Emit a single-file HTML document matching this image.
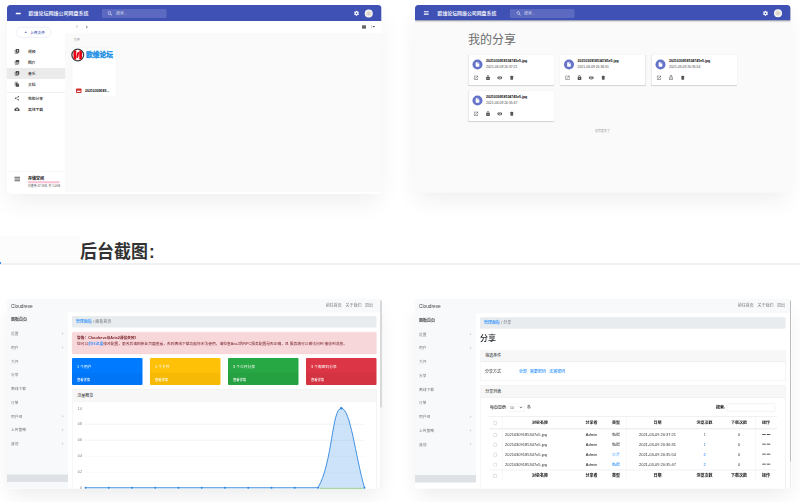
<!DOCTYPE html>
<html lang="zh-CN">
<head>
<meta charset="utf-8">
<title>Cloudreve 截图</title>
<style>
*{box-sizing:border-box;margin:0;padding:0}
html,body{width:800px;height:502px;overflow:hidden;background:#fff}
body{position:relative;font-family:"Liberation Sans","Noto Sans CJK SC",sans-serif;color:#212529}
.shot{position:absolute;width:1500px;height:752px;transform-origin:0 0;transform:scale(.25)}
.abs,.shot *{position:absolute}
.shot span,.shot b,.shot a{position:static}
.clip{left:0;top:0;width:100%;height:100%;overflow:hidden;border-radius:inherit}
.t{white-space:nowrap;line-height:1}
.mui{border-radius:14px 14px 18px 18px;background:#fafafa;height:750px;box-shadow:0 40px 100px -10px rgba(0,0,0,.065)}
.mui .bar{left:0;top:0;width:100%;height:66px;background:#3f51b5;box-shadow:0 3px 6px rgba(0,0,0,.25)}
.mui .title{left:86px;top:22px;font-size:20px;color:#fff;font-weight:500}
.mui .search{left:380px;top:16px;width:258px;height:36px;border-radius:4px;background:rgba(255,255,255,.15)}
.mui .search .t{left:56px;top:10px;font-size:16px;color:rgba(255,255,255,.7)}
.hline{background:#fff;border-radius:2px}
.av{width:32px;height:32px;border-radius:50%;background:radial-gradient(circle at 50% 50%,#cfc8ba 0,#e6e1d8 35%,#fff 75%)}
.adm{background:#fff;height:758px;border-radius:10px 10px 0 0;box-shadow:0 36px 80px -16px rgba(0,0,0,.085);font-size:16px}
.adm .in{left:0;top:4px;width:100%;height:754px}
.adm .nav{left:0;top:-4px;width:1520px;height:54px;background:#f8f9fa}
.adm .side{left:0;top:50px;width:244px;height:710px;background:#f8f9fa}
.adm .tog{left:0;top:698px;width:244px;height:30px;background:#dee2e6}
.adm .brand{left:16px;top:14px;font-size:19px;color:#444}
.adm .navr{right:36px;top:14px;font-size:16px;color:rgba(0,0,0,.55);word-spacing:10px}
.adm .mi{left:16px;font-size:16px;color:#777}
.adm .chev{left:217px;width:7px;height:7px;border-right:2px solid #c4c4c4;border-bottom:2px solid #c4c4c4;transform:rotate(-45deg)}
.adm .crumb{left:260px;top:64px;width:1218px;height:46px;background:#e9ecef;border-radius:4px}
.adm .crumb .t{left:16px;top:15px;font-size:16px;color:#6c757d}
.adm a,.lnk{color:#007bff;text-decoration:none}
.adm .card{border:1px solid rgba(0,0,0,.125);border-radius:4px;background:#fff}
.adm .ch{left:0;top:0;right:0;height:46px;background:#f7f7f7;border-bottom:1px solid rgba(0,0,0,.125)}
.adm .ch .t{left:20px;top:15px;font-size:16px}
.sb{left:1494px;top:-4px;width:4px;height:760px;background:#ececec}
.sb i{left:0;top:6px;width:4px;background:#bdbdbd;border-radius:2px}
</style>
</head>
<body>
<div class="abs" style="left:0;top:236px;width:80px;height:27px;background:#fcfcfd"></div>
<div class="abs" style="left:0;top:263px;width:800px;height:2px;background:#eef2f5"></div>
<div class="abs" style="left:0;top:262px;width:1px;height:2px;background:#3b8cff"></div>
<div class="abs t" id="h2" style="left:80px;top:241px;font-size:17.9px;line-height:22px;font-weight:700;color:#333;transform-origin:0 50%;transform:scaleX(.948)">后台截图<span style="margin-left:1.2px">:</span></div>
<div class="shot mui" id="s1" style="left:7px;top:5px;height:755px;width:1498px;border-radius:14px 14px 8px 18px"><div class="clip">
<div class="bar"></div>
<div style="left:35px;top:31px;width:20px;height:6px;background:#fff;border-radius:2px"></div>
<div class="t" style="left:86px;top:22px;font-size:20px;color:#fff;font-weight:500">欧维论坛网络公司网盘系统</div>
<div class="search"><svg style="left:20px;top:6px" width="24" height="24" viewBox="0 0 24 24"><path fill="#fff" d="M15.5 14h-.79l-.28-.27A6.47 6.47 0 0 0 16 9.5 6.5 6.5 0 1 0 9.500 16c1.610 0 3.090-.59 4.230-1.570l.27.28v.79l5 4.990L20.490 19l-4.990-5zm-6 0C7.010 14 5 11.990 5 9.500S7.010 5 9.500 5 14 7.010 14 9.500 11.990 14 9.500 14z"/></svg>
<div class="t">搜索...</div></div>
<svg style="left:1386px;top:21px" width="24" height="24" viewBox="0 0 24 24"><path fill="#fff" d="M19.430 12.980c.04-.32.07-.64.07-.98s-.03-.66-.07-.98l2.110-1.650c.19-.15.24-.42.120-.64l-2-3.460c-.12-.22-.39-.3-.61-.22l-2.490 1c-.52-.4-1.080-.73-1.690-.98l-.38-2.650A.488.488 0 0 0 14 2h-4c-.25 0-.46.180-.49.420l-.38 2.650c-.61.250-1.170.590-1.690.98l-2.490-1c-.23-.09-.49 0-.61.220l-2 3.460c-.13.220-.07.490.120.640l2.110 1.650c-.04.320-.07.650-.07.980s.03.660.07.980l-2.110 1.650c-.19.150-.24.420-.120.640l2 3.460c.12.220.39.300.61.220l2.490-1c.52.400 1.080.730 1.690.980l.38 2.650c.03.240.24.420.49.420h4c.25 0 .46-.18.490-.42l.38-2.650c.61-.25 1.170-.59 1.690-.98l2.490 1c.23.090.49 0 .61-.22l2-3.460c.12-.22.07-.49-.12-.64l-2.110-1.650zM12 15.500c-1.930 0-3.500-1.570-3.500-3.500s1.570-3.500 3.500-3.500 3.500 1.570 3.500 3.500-1.570 3.500-3.500 3.500z"/></svg>
<div class="av" style="left:1431px;top:18px"></div>
<div style="left:0px;top:64px;width:232px;height:686px;background:#fff"></div>
<div style="left:36px;top:88px;width:140px;height:42px;border:1.5px solid #b9c1ea;border-radius:21px"></div>
<div class="t" style="left:70px;top:100px;font-size:16px;color:#3f51b5;font-weight:700">+</div>
<div class="t" style="left:92px;top:101px;font-size:15px;color:#3f51b5;font-weight:500">上传文件</div>
<div style="left:0px;top:252px;width:232px;height:44px;background:#ebebeb"></div>
<svg style="left:29px;top:174px" width="22" height="22" viewBox="0 0 24 24"><path fill="#4a4a4a" d="M4 6H2v14c0 1.100.9 2 2 2h14v-2H4V6zm16-4H8c-1.100 0-2 .9-2 2v12c0 1.100.9 2 2 2h12c1.100 0 2-.9 2-2V4c0-1.100-.9-2-2-2zm-8 12.500v-9l6 4.500-6 4.500z"/></svg>
<div class="t" style="left:84px;top:178px;font-size:15px;color:#111;font-weight:500">视频</div>
<svg style="left:29px;top:218px" width="22" height="22" viewBox="0 0 24 24"><path fill="#4a4a4a" d="M22 16V4c0-1.100-.9-2-2-2H8c-1.100 0-2 .9-2 2v12c0 1.100.9 2 2 2h12c1.100 0 2-.9 2-2zm-11-4l2.030 2.710L16 11l4 5H8l3-4zM2 6v14c0 1.100.9 2 2 2h14v-2H4V6H2z"/></svg>
<div class="t" style="left:84px;top:222px;font-size:15px;color:#111;font-weight:500">图片</div>
<svg style="left:29px;top:262px" width="22" height="22" viewBox="0 0 24 24"><path fill="#4a4a4a" d="M20 2H8c-1.100 0-2 .9-2 2v12c0 1.100.9 2 2 2h12c1.100 0 2-.9 2-2V4c0-1.100-.9-2-2-2zm-2 5h-3v5.500a2.500 2.500 0 0 1-5 0 2.500 2.500 0 0 1 2.500-2.500c.57 0 1.080.190 1.500.510V5h4v2zM4 6H2v14c0 1.100.9 2 2 2h14v-2H4V6z"/></svg>
<div class="t" style="left:84px;top:266px;font-size:15px;color:#111;font-weight:500">音乐</div>
<svg style="left:29px;top:306px" width="22" height="22" viewBox="0 0 24 24"><path fill="#4a4a4a" d="M16 1H4c-1.100 0-2 .9-2 2v14h2V3h12V1zm-1 4l6 6v10c0 1.100-.9 2-2 2H7.990C6.890 23 6 22.100 6 21l.01-14c0-1.100.89-2 1.990-2h7zm-1 7h5.500L14 6.500V12z"/></svg>
<div class="t" style="left:84px;top:310px;font-size:15px;color:#111;font-weight:500">文档</div>
<div style="left:0px;top:349px;width:232px;height:2px;background:#e3e3e3"></div>
<svg style="left:29px;top:362px" width="22" height="22" viewBox="0 0 24 24"><path fill="#4a4a4a" d="M18 16.080c-.76 0-1.440.3-1.960.77L8.910 12.700c.05-.23.090-.46.090-.7s-.04-.47-.09-.7l7.050-4.110c.54.5 1.250.81 2.040.81 1.660 0 3-1.340 3-3s-1.340-3-3-3-3 1.340-3 3c0 .24.04.47.09.7L8.040 9.810C7.500 9.310 6.790 9 6 9c-1.660 0-3 1.340-3 3s1.340 3 3 3c.79 0 1.500-.31 2.040-.81l7.120 4.160c-.05.210-.08.430-.08.650 0 1.610 1.310 2.920 2.920 2.920 1.610 0 2.920-1.310 2.920-2.920s-1.310-2.920-2.920-2.920z"/></svg>
<div class="t" style="left:84px;top:366px;font-size:15px;color:#111;font-weight:500">我的分享</div>
<svg style="left:29px;top:406px" width="22" height="22" viewBox="0 0 24 24"><path fill="#4a4a4a" d="M19.350 10.040C18.670 6.590 15.640 4 12 4 9.110 4 6.600 5.640 5.350 8.040 2.340 8.360 0 10.910 0 14c0 3.310 2.690 6 6 6h13c2.760 0 5-2.240 5-5 0-2.640-2.050-4.780-4.650-4.960zM17 13l-5 5-5-5h3V9h4v4h3z"/></svg>
<div class="t" style="left:84px;top:410px;font-size:15px;color:#111;font-weight:500">离线下载</div>
<div style="left:0px;top:664px;width:232px;height:2px;background:#f0f0f0"></div>
<div style="left:30px;top:687px;width:22px;height:4px;background:#666"></div>
<div style="left:30px;top:694px;width:22px;height:4px;background:#666"></div>
<div style="left:30px;top:701px;width:22px;height:4px;background:#666"></div>
<div class="t" style="left:84px;top:687px;font-size:16px;color:#111;font-weight:700">存储空间</div>
<div style="left:84px;top:705px;width:126px;height:8px;background:#f9bfd3"></div>
<div class="t" style="left:84px;top:718px;font-size:11.5px;color:#555">已使用 47.5KB, 共 1.0GB</div>
<div style="left:232px;top:64px;width:1268px;height:47px;background:#fff"></div>
<div class="t" style="left:277px;top:78px;font-size:16px;color:#555">/</div>
<div style="left:313px;top:84px;width:8px;height:8px;border-right:2px solid #666;border-top:2px solid #666;transform:rotate(45deg)"></div>
<div style="left:1420px;top:82px;width:16px;height:5px;background:#333"></div>
<div style="left:1420px;top:89px;width:16px;height:5px;background:#333"></div>
<div style="left:1456px;top:80px;width:3px;height:14px;background:#ccc"></div>
<div style="left:1462px;top:84px;border:5px solid transparent;border-top:6px solid #444;width:0;height:0"></div>
<div class="t" style="left:266px;top:133px;font-size:13px;color:#888">文件</div>
<div style="left:260px;top:170px;width:176px;height:196px;background:#fff;border:1px solid #ececec;border-radius:6px"></div>
<div style="left:257px;top:174px;width:52px;height:52px;border-radius:50%;background:#fff;border:5px solid #3c3c3c"></div>
<div style="left:266px;top:182px;width:11px;height:36px;background:#e60012;border-radius:6px 0 0 6px"></div>
<div style="left:289px;top:182px;width:11px;height:36px;background:#e60012;border-radius:0 6px 6px 0"></div>
<div style="left:279px;top:188px;width:8px;height:24px;background:#e60012;border-radius:4px;transform:skewX(-12deg)"></div>
<div class="t" style="left:316px;top:185px;font-size:27px;font-weight:900;color:#1e90e6;-webkit-text-stroke:1px #1e90e6">欧维论坛</div>
<div style="left:276px;top:334px;width:22px;height:18px;border-radius:3px;background:#d32f2f"></div>
<div style="left:280px;top:343px;width:14px;height:5px;background:#fff"></div>
<div style="left:0px;top:748px;width:1500px;height:8px;background:#fff"></div>
<div class="t" style="left:312px;top:336px;font-size:14px;color:#000;font-weight:700">20210309185...</div>
</div></div>
<div class="shot mui" id="s2" style="left:415px;top:5px;width:1502px"><div class="clip">
<div class="bar" style="height:61px;box-shadow:0 3px 8px rgba(0,0,0,.35)"></div>
<div style="left:35px;top:25px;width:20px;height:3px;background:#fff;border-radius:2px"></div>
<div style="left:35px;top:31px;width:20px;height:3px;background:#fff;border-radius:2px"></div>
<div style="left:35px;top:37px;width:20px;height:3px;background:#fff;border-radius:2px"></div>
<div class="t" style="left:90px;top:22px;font-size:19.6px;color:#fff;font-weight:500">欧维论坛网络公司网盘系统</div>
<div class="search"><svg style="left:24px;top:7px" width="22" height="22" viewBox="0 0 24 24"><path fill="#fff" d="M15.5 14h-.79l-.28-.27A6.47 6.47 0 0 0 16 9.5 6.5 6.5 0 1 0 9.500 16c1.610 0 3.090-.59 4.230-1.570l.27.28v.79l5 4.990L20.490 19l-4.990-5zm-6 0C7.010 14 5 11.990 5 9.500S7.010 5 9.500 5 14 7.010 14 9.500 11.990 14 9.500 14z"/></svg>
<div class="t">搜索...</div></div>
<svg style="left:1390px;top:21px" width="24" height="24" viewBox="0 0 24 24"><path fill="#fff" d="M19.430 12.980c.04-.32.07-.64.07-.98s-.03-.66-.07-.98l2.110-1.650c.19-.15.24-.42.120-.64l-2-3.460c-.12-.22-.39-.3-.61-.22l-2.490 1c-.52-.4-1.080-.73-1.690-.98l-.38-2.650A.488.488 0 0 0 14 2h-4c-.25 0-.46.180-.49.420l-.38 2.650c-.61.250-1.170.590-1.690.98l-2.490-1c-.23-.09-.49 0-.61.220l-2 3.460c-.13.220-.07.490.120.640l2.110 1.650c-.04.320-.07.650-.07.980s.03.660.07.980l-2.110 1.650c-.19.150-.24.420-.120.640l2 3.460c.12.220.39.300.61.220l2.490-1c.52.400 1.080.730 1.690.980l.38 2.650c.03.240.24.420.49.420h4c.25 0 .46-.18.490-.42l.38-2.650c.61-.25 1.170-.59 1.690-.98l2.490 1c.23.090.49 0 .61-.22l2-3.460c.12-.22.07-.49-.12-.64l-2.110-1.650zM12 15.500c-1.930 0-3.500-1.570-3.500-3.500s1.570-3.500 3.500-3.500 3.500 1.570 3.500 3.500-1.570 3.500-3.500 3.500z"/></svg>
<div class="av" style="left:1436px;top:17px"></div>
<div class="t" style="left:212px;top:112px;font-size:48px;line-height:52px;color:#6c6c6c;font-weight:400">我的分享</div>
<div style="left:214px;top:200px;width:342px;height:120px;background:#fff;border-radius:4px;box-shadow:0 3px 4px rgba(0,0,0,.16),0 0 2px rgba(0,0,0,.08)"></div>
<div style="left:230px;top:218px;width:40px;height:40px;border-radius:50%;background:#6573c9"></div>
<svg style="left:239px;top:227px" width="22" height="22" viewBox="0 0 24 24"><path fill="#fff" d="M6 2c-1.100 0-1.990.9-1.990 2L4 20c0 1.100.89 2 1.990 2H18c1.100 0 2-.9 2-2V8l-6-6H6zm7 7V3.500L18.500 9H13z"/></svg>
<div class="t" style="left:284px;top:217px;font-size:14px;color:#000;font-weight:700">2021030918534745e5.jpg</div>
<div class="t" style="left:284px;top:241px;font-size:13.5px;color:#444">2021-03-09 20:37:21</div>
<svg style="left:233.0px;top:280px" width="22" height="22" viewBox="0 0 24 24"><path fill="#555" d="M19 19H5V5h7V3H5c-1.110 0-2 .9-2 2v14c0 1.100.89 2 2 2h14c1.100 0 2-.9 2-2v-7h-2v7zM14 3v2h3.590l-9.830 9.830 1.410 1.410L19 6.410V10h2V3h-7z"/></svg>
<svg style="left:280.5px;top:280px" width="22" height="22" viewBox="0 0 24 24"><path fill="#555" d="M18 8h-1V6c0-2.760-2.240-5-5-5S7 3.240 7 6v2H6c-1.100 0-2 .9-2 2v10c0 1.100.9 2 2 2h12c1.100 0 2-.9 2-2V10c0-1.100-.9-2-2-2zm-6 9c-1.100 0-2-.9-2-2s.9-2 2-2 2 .9 2 2-.9 2-2 2zm3.100-9H8.900V6c0-1.710 1.390-3.100 3.100-3.100 1.710 0 3.100 1.390 3.100 3.100v2z"/></svg>
<svg style="left:328.0px;top:280px" width="22" height="22" viewBox="0 0 24 24"><path fill="#555" d="M12 4.500C7 4.500 2.730 7.610 1 12c1.730 4.390 6 7.500 11 7.500s9.270-3.110 11-7.500c-1.730-4.390-6-7.500-11-7.500zM12 17c-2.760 0-5-2.240-5-5s2.240-5 5-5 5 2.240 5 5-2.240 5-5 5zm0-8c-1.660 0-3 1.340-3 3s1.340 3 3 3 3-1.340 3-3-1.340-3-3-3z"/></svg>
<svg style="left:375.5px;top:280px" width="22" height="22" viewBox="0 0 24 24"><path fill="#555" d="M6 19c0 1.100.9 2 2 2h8c1.100 0 2-.9 2-2V7H6v12zM19 4h-3.500l-1-1h-5l-1 1H5v2h14V4z"/></svg>
<div style="left:580px;top:200px;width:342px;height:120px;background:#fff;border-radius:4px;box-shadow:0 3px 4px rgba(0,0,0,.16),0 0 2px rgba(0,0,0,.08)"></div>
<div style="left:596px;top:218px;width:40px;height:40px;border-radius:50%;background:#6573c9"></div>
<svg style="left:605px;top:227px" width="22" height="22" viewBox="0 0 24 24"><path fill="#fff" d="M6 2c-1.100 0-1.990.9-1.990 2L4 20c0 1.100.89 2 1.990 2H18c1.100 0 2-.9 2-2V8l-6-6H6zm7 7V3.500L18.500 9H13z"/></svg>
<div class="t" style="left:650px;top:217px;font-size:14px;color:#000;font-weight:700">2021030918534745e5.jpg</div>
<div class="t" style="left:650px;top:241px;font-size:13.5px;color:#444">2021-03-09 20:36:31</div>
<svg style="left:599.0px;top:280px" width="22" height="22" viewBox="0 0 24 24"><path fill="#555" d="M19 19H5V5h7V3H5c-1.110 0-2 .9-2 2v14c0 1.100.89 2 2 2h14c1.100 0 2-.9 2-2v-7h-2v7zM14 3v2h3.590l-9.830 9.830 1.410 1.410L19 6.410V10h2V3h-7z"/></svg>
<svg style="left:646.5px;top:280px" width="22" height="22" viewBox="0 0 24 24"><path fill="#555" d="M18 8h-1V6c0-2.760-2.240-5-5-5S7 3.240 7 6v2H6c-1.100 0-2 .9-2 2v10c0 1.100.9 2 2 2h12c1.100 0 2-.9 2-2V10c0-1.100-.9-2-2-2zm-6 9c-1.100 0-2-.9-2-2s.9-2 2-2 2 .9 2 2-.9 2-2 2zm3.100-9H8.900V6c0-1.710 1.390-3.100 3.100-3.100 1.710 0 3.100 1.390 3.100 3.100v2z"/></svg>
<svg style="left:694.0px;top:280px" width="22" height="22" viewBox="0 0 24 24"><path fill="#555" d="M12 4.500C7 4.500 2.730 7.610 1 12c1.730 4.390 6 7.500 11 7.500s9.270-3.110 11-7.500c-1.730-4.390-6-7.500-11-7.500zM12 17c-2.760 0-5-2.240-5-5s2.240-5 5-5 5 2.240 5 5-2.240 5-5 5zm0-8c-1.660 0-3 1.340-3 3s1.340 3 3 3 3-1.340 3-3-1.340-3-3-3z"/></svg>
<svg style="left:741.5px;top:280px" width="22" height="22" viewBox="0 0 24 24"><path fill="#555" d="M6 19c0 1.100.9 2 2 2h8c1.100 0 2-.9 2-2V7H6v12zM19 4h-3.500l-1-1h-5l-1 1H5v2h14V4z"/></svg>
<div style="left:946px;top:200px;width:342px;height:120px;background:#fff;border-radius:4px;box-shadow:0 3px 4px rgba(0,0,0,.16),0 0 2px rgba(0,0,0,.08)"></div>
<div style="left:962px;top:218px;width:40px;height:40px;border-radius:50%;background:#6573c9"></div>
<svg style="left:971px;top:227px" width="22" height="22" viewBox="0 0 24 24"><path fill="#fff" d="M6 2c-1.100 0-1.990.9-1.990 2L4 20c0 1.100.89 2 1.990 2H18c1.100 0 2-.9 2-2V8l-6-6H6zm7 7V3.500L18.500 9H13z"/></svg>
<div class="t" style="left:1016px;top:217px;font-size:14px;color:#000;font-weight:700">2021030918534745e5.jpg</div>
<div class="t" style="left:1016px;top:241px;font-size:13.5px;color:#444">2021-03-09 20:35:54</div>
<svg style="left:965.0px;top:280px" width="22" height="22" viewBox="0 0 24 24"><path fill="#555" d="M19 19H5V5h7V3H5c-1.110 0-2 .9-2 2v14c0 1.100.89 2 2 2h14c1.100 0 2-.9 2-2v-7h-2v7zM14 3v2h3.590l-9.830 9.830 1.410 1.410L19 6.410V10h2V3h-7z"/></svg>
<svg style="left:1012.5px;top:280px" width="22" height="22" viewBox="0 0 24 24"><path fill="#555" d="M12 17c1.100 0 2-.9 2-2s-.9-2-2-2-2 .9-2 2 .9 2 2 2zm6-9h-1V6c0-2.760-2.240-5-5-5S7 3.240 7 6h1.900c0-1.710 1.390-3.100 3.100-3.100 1.710 0 3.100 1.390 3.100 3.100v2H6c-1.100 0-2 .9-2 2v10c0 1.100.9 2 2 2h12c1.100 0 2-.9 2-2V10c0-1.100-.9-2-2-2zm0 12H6V10h12v10z"/></svg>
<svg style="left:1060.0px;top:280px" width="22" height="22" viewBox="0 0 24 24"><path fill="#555" d="M6 19c0 1.100.9 2 2 2h8c1.100 0 2-.9 2-2V7H6v12zM19 4h-3.500l-1-1h-5l-1 1H5v2h14V4z"/></svg>
<div style="left:214px;top:344px;width:342px;height:120px;background:#fff;border-radius:4px;box-shadow:0 3px 4px rgba(0,0,0,.16),0 0 2px rgba(0,0,0,.08)"></div>
<div style="left:230px;top:362px;width:40px;height:40px;border-radius:50%;background:#6573c9"></div>
<svg style="left:239px;top:371px" width="22" height="22" viewBox="0 0 24 24"><path fill="#fff" d="M6 2c-1.100 0-1.990.9-1.990 2L4 20c0 1.100.89 2 1.990 2H18c1.100 0 2-.9 2-2V8l-6-6H6zm7 7V3.500L18.500 9H13z"/></svg>
<div class="t" style="left:284px;top:361px;font-size:14px;color:#000;font-weight:700">2021030918534745e5.jpg</div>
<div class="t" style="left:284px;top:385px;font-size:13.5px;color:#444">2021-03-09 20:35:47</div>
<svg style="left:233.0px;top:424px" width="22" height="22" viewBox="0 0 24 24"><path fill="#555" d="M19 19H5V5h7V3H5c-1.110 0-2 .9-2 2v14c0 1.100.89 2 2 2h14c1.100 0 2-.9 2-2v-7h-2v7zM14 3v2h3.590l-9.830 9.830 1.410 1.410L19 6.410V10h2V3h-7z"/></svg>
<svg style="left:280.5px;top:424px" width="22" height="22" viewBox="0 0 24 24"><path fill="#555" d="M18 8h-1V6c0-2.760-2.240-5-5-5S7 3.240 7 6v2H6c-1.100 0-2 .9-2 2v10c0 1.100.9 2 2 2h12c1.100 0 2-.9 2-2V10c0-1.100-.9-2-2-2zm-6 9c-1.100 0-2-.9-2-2s.9-2 2-2 2 .9 2 2-.9 2-2 2zm3.100-9H8.900V6c0-1.710 1.390-3.100 3.100-3.100 1.710 0 3.100 1.390 3.100 3.100v2z"/></svg>
<svg style="left:328.0px;top:424px" width="22" height="22" viewBox="0 0 24 24"><path fill="#555" d="M12 4.500C7 4.500 2.730 7.610 1 12c1.730 4.390 6 7.500 11 7.500s9.270-3.110 11-7.500c-1.730-4.390-6-7.500-11-7.500zM12 17c-2.760 0-5-2.240-5-5s2.240-5 5-5 5 2.240 5 5-2.240 5-5 5zm0-8c-1.660 0-3 1.340-3 3s1.340 3 3 3 3-1.340 3-3-1.340-3-3-3z"/></svg>
<svg style="left:375.5px;top:424px" width="22" height="22" viewBox="0 0 24 24"><path fill="#555" d="M6 19c0 1.100.9 2 2 2h8c1.100 0 2-.9 2-2V7H6v12zM19 4h-3.500l-1-1h-5l-1 1H5v2h14V4z"/></svg>
<div class="t" style="left:720px;top:498px;font-size:12px;color:#999">没有更多了</div>
</div></div>
<div class="shot adm" id="s3" style="left:7px;top:299px;"><div class="clip">
<div class="in">
<div class="nav" style="height:54px"></div><div class="side" style="top:50px"></div><div class="tog" style="top:698px"></div>
<div class="t brand" style="top:14px">Cloudreve</div>
<div class="t navr" style="top:14px;right:36px">前往首页 关于我们 退出</div>
<div class="t mi" style="top:72px;color:#111;font-weight:500">面板首页</div>
<div class="t mi" style="top:127px;color:#777;font-size:15px">设置</div>
<div class="chev" style="top:131px"></div>
<div class="t mi" style="top:182px;color:#777;font-size:15px">用户</div>
<div class="chev" style="top:186px"></div>
<div class="t mi" style="top:237px;color:#777;font-size:15px">文件</div>
<div class="t mi" style="top:292px;color:#777;font-size:15px">分享</div>
<div class="t mi" style="top:347px;color:#777;font-size:15px">离线下载</div>
<div class="t mi" style="top:402px;color:#777;font-size:15px">订单</div>
<div class="t mi" style="top:457px;color:#777;font-size:15px">用户组</div>
<div class="chev" style="top:461px"></div>
<div class="t mi" style="top:512px;color:#777;font-size:15px">上传策略</div>
<div class="chev" style="top:516px"></div>
<div class="t mi" style="top:567px;color:#777;font-size:15px">其他</div>
<div class="chev" style="top:571px"></div>
<div class="sb" style="left:1494px"><i style="height:428px"></i></div>
<div class="crumb" style="top:64px"><div class="t"><a>管理面板</a> / 面板首页</div></div>
<div style="left:260px;top:128px;width:1218px;height:88px;background:#f8d7da;border:1px solid #f5c6cb;border-radius:4px"></div>
<div class="t" style="left:280px;top:144px;font-size:15px;color:#721c24;font-weight:700">警告：Cloudreve与Aria2通信失败！</div>
<div class="t" style="left:280px;top:168px;font-size:15px;color:#721c24">您可以<a>前往这里</a>修改配置，更改后请刷新此页面查看，否则离线下载功能将无法使用，请检查Aria2的RPC服务配置是否正确，且 服务端可以被访问到 接收到消息。</div>
<div style="left:260px;top:232px;width:282px;height:108px;background:#007bff;border-radius:4px"></div>
<div style="left:260px;top:290px;width:282px;height:50px;background:rgba(0,0,0,.035);border-top:1px solid rgba(0,0,0,.08);border-radius:0 0 4px 4px"></div>
<div class="t" style="left:280px;top:259px;font-size:15px;color:#fff">1 个用户</div>
<div class="t" style="left:280px;top:311px;font-size:13px;color:#fff;font-weight:500">查看详情</div>
<div style="left:572px;top:232px;width:282px;height:108px;background:#ffc107;border-radius:4px"></div>
<div style="left:572px;top:290px;width:282px;height:50px;background:rgba(0,0,0,.035);border-top:1px solid rgba(0,0,0,.08);border-radius:0 0 4px 4px"></div>
<div class="t" style="left:592px;top:259px;font-size:15px;color:#fff">1 个文件</div>
<div class="t" style="left:592px;top:311px;font-size:13px;color:#fff;font-weight:500">查看详情</div>
<div style="left:884px;top:232px;width:282px;height:108px;background:#28a745;border-radius:4px"></div>
<div style="left:884px;top:290px;width:282px;height:50px;background:rgba(0,0,0,.035);border-top:1px solid rgba(0,0,0,.08);border-radius:0 0 4px 4px"></div>
<div class="t" style="left:904px;top:259px;font-size:15px;color:#fff">3 个公开分享</div>
<div class="t" style="left:904px;top:311px;font-size:13px;color:#fff;font-weight:500">查看详情</div>
<div style="left:1196px;top:232px;width:282px;height:108px;background:#dc3545;border-radius:4px"></div>
<div style="left:1196px;top:290px;width:282px;height:50px;background:rgba(0,0,0,.035);border-top:1px solid rgba(0,0,0,.08);border-radius:0 0 4px 4px"></div>
<div class="t" style="left:1216px;top:259px;font-size:15px;color:#fff">3 个需密码分享</div>
<div class="t" style="left:1216px;top:311px;font-size:13px;color:#fff;font-weight:500">查看详情</div>
<div class="card" style="left:260px;top:358px;width:1218px;height:420px"><div class="ch"><div class="t">流量概览</div></div></div>
<svg style="left:260px;top:407px" width="1218" height="349" viewBox="260 404 1218 349">
<g stroke="#e6e6e6" stroke-width="2"><line x1="308" x2="1430" y1="494" y2="494"/><line x1="308" x2="1430" y1="558" y2="558"/><line x1="308" x2="1430" y1="622" y2="622" stroke="#f1f1f1"/><line x1="308" x2="1430" y1="686" y2="686" stroke="#f3f3f3"/></g>
<g font-family="Liberation Sans, sans-serif" font-size="12" fill="#666" text-anchor="end"><text x="300" y="436">1.0</text><text x="300" y="498">0.8</text><text x="300" y="562">0.6</text><text x="300" y="626">0.4</text><text x="300" y="690">0.2</text><text x="300" y="752">0</text></g>
<path d="M314 748 L1244 748 C1302 649 1300 430 1337 430 C1374 430 1393 621 1430 748 Z" fill="rgba(54,142,230,.25)"/>
<path d="M314 748 L1244 748 C1302 649 1300 430 1337 430 C1374 430 1393 621 1430 748" fill="none" stroke="#2f86e0" stroke-width="3.6" stroke-linejoin="round"/>
<line x1="1250" x2="1426" y1="750" y2="750" stroke="#66bb6a" stroke-width="3"/>
<g fill="#2f86e0"><circle cx="1337" cy="430" r="5"/><circle cx="407" cy="748" r="4"/><circle cx="500" cy="748" r="4"/><circle cx="593" cy="748" r="4"/><circle cx="686" cy="748" r="4"/><circle cx="779" cy="748" r="4"/><circle cx="872" cy="748" r="4"/><circle cx="965" cy="748" r="4"/><circle cx="1058" cy="748" r="4"/><circle cx="1151" cy="748" r="4"/><circle cx="1244" cy="748" r="4"/><circle cx="1430" cy="748" r="4"/><circle cx="314" cy="748" r="4"/></g>
</svg>
</div>
</div></div>
<div class="shot adm" id="s4" style="left:415px;top:299px;width:1506px"><div class="clip">
<div class="in">
<div class="nav" style="height:56px"></div><div class="side" style="top:52px;height:676px"></div><div class="tog" style="top:700px"></div>
<div class="t brand" style="top:16px">Cloudreve</div>
<div class="t navr" style="top:16px;right:26px">前往首页 关于我们 退出</div>
<div class="t mi" style="top:74px;color:#111;font-weight:500">面板首页</div>
<div class="t mi" style="top:129px;color:#777;font-size:15px">设置</div>
<div class="chev" style="top:133px"></div>
<div class="t mi" style="top:184px;color:#777;font-size:15px">用户</div>
<div class="chev" style="top:188px"></div>
<div class="t mi" style="top:239px;color:#777;font-size:15px">文件</div>
<div class="t mi" style="top:294px;color:#777;font-size:15px">分享</div>
<div class="t mi" style="top:349px;color:#777;font-size:15px">离线下载</div>
<div class="t mi" style="top:404px;color:#777;font-size:15px">订单</div>
<div class="t mi" style="top:459px;color:#777;font-size:15px">用户组</div>
<div class="chev" style="top:463px"></div>
<div class="t mi" style="top:514px;color:#777;font-size:15px">上传策略</div>
<div class="chev" style="top:518px"></div>
<div class="t mi" style="top:569px;color:#777;font-size:15px">其他</div>
<div class="chev" style="top:573px"></div>
<div class="sb" style="left:1500px"><i style="height:644px"></i></div>
<div class="crumb" style="top:69px;width:1222px"><div class="t"><a>管理面板</a> / 分享</div></div>
<div class="t" style="left:260px;top:135px;font-size:32px;line-height:36px;color:#212529;font-weight:500">分享</div>
<div class="card" style="left:260px;top:200px;width:1222px;height:124px"><div class="ch"><div class="t">筛选条件</div></div></div>
<div class="t" style="left:280px;top:278px;font-size:16px;color:#333">分享方式</div>
<div class="t" style="left:416px;top:278px;font-size:16px;word-spacing:8px;color:#007bff">全部 需要密码 无需密码</div>
<div class="card" style="left:260px;top:342px;width:1222px;height:420px"><div class="ch"><div class="t">分享列表</div></div></div>
<div class="t" style="left:300px;top:422px;font-size:16px;color:#222;font-weight:500">每页显示</div>
<div style="left:368px;top:414px;width:72px;height:32px;border:1px solid #ced4da;border-radius:4px;background:#fff"></div>
<div class="t" style="left:380px;top:423px;font-size:14px;color:#495057">10</div>
<div style="left:420px;top:423px;width:8px;height:8px;border-right:2px solid #555;border-bottom:2px solid #555;transform:rotate(45deg)"></div>
<div class="t" style="left:448px;top:422px;font-size:16px;color:#333">条</div>
<div class="t" style="left:1204px;top:422px;font-size:16px;color:#111;font-weight:700">搜索:</div>
<div style="left:1248px;top:414px;width:192px;height:32px;border:1px solid #ced4da;border-radius:4px;background:#fff"></div>
<div style="left:296px;top:465px;width:1152px;height:2px;background:#dee2e6"></div>
<div style="left:296px;top:514px;width:1152px;height:3px;background:#dee2e6"></div>
<div style="left:296px;top:679px;width:1152px;height:2px;background:#dee2e6"></div>
<div style="left:350px;top:466px;width:1px;height:260px;background:#dee2e6"></div>
<div style="left:846px;top:466px;width:1px;height:260px;background:#dee2e6"></div>
<div style="left:1360px;top:466px;width:1px;height:260px;background:#dee2e6"></div>
<div style="left:313px;top:485px;width:14px;height:14px;border:1.5px solid #888;border-radius:3px;background:#fff"></div>
<div class="t" style="left:350px;width:300px;text-align:center;top:484px;font-size:16px;font-weight:700;color:#111">对象名称</div>
<div class="t" style="left:556px;width:300px;text-align:center;top:484px;font-size:16px;font-weight:700;color:#111">分享者</div>
<div class="t" style="left:654px;width:300px;text-align:center;top:484px;font-size:16px;font-weight:700;color:#111">类型</div>
<div class="t" style="left:820px;width:300px;text-align:center;top:484px;font-size:16px;font-weight:700;color:#111">日期</div>
<div class="t" style="left:1008px;width:300px;text-align:center;top:484px;font-size:16px;font-weight:700;color:#111">浏览次数</div>
<div class="t" style="left:1146px;width:300px;text-align:center;top:484px;font-size:16px;font-weight:700;color:#111">下载次数</div>
<div class="t" style="left:1254px;width:300px;text-align:center;top:484px;font-size:16px;font-weight:700;color:#111">操作</div>
<div style="left:313px;top:696px;width:14px;height:14px;border:1.5px solid #888;border-radius:3px;background:#fff"></div>
<div class="t" style="left:350px;width:300px;text-align:center;top:695px;font-size:16px;font-weight:700;color:#111">对象名称</div>
<div class="t" style="left:556px;width:300px;text-align:center;top:695px;font-size:16px;font-weight:700;color:#111">分享者</div>
<div class="t" style="left:654px;width:300px;text-align:center;top:695px;font-size:16px;font-weight:700;color:#111">类型</div>
<div class="t" style="left:820px;width:300px;text-align:center;top:695px;font-size:16px;font-weight:700;color:#111">日期</div>
<div class="t" style="left:1008px;width:300px;text-align:center;top:695px;font-size:16px;font-weight:700;color:#111">浏览次数</div>
<div class="t" style="left:1146px;width:300px;text-align:center;top:695px;font-size:16px;font-weight:700;color:#111">下载次数</div>
<div class="t" style="left:1254px;width:300px;text-align:center;top:695px;font-size:16px;font-weight:700;color:#111">操作</div>
<div style="left:313px;top:533px;width:14px;height:14px;border:1.5px solid #888;border-radius:3px;background:#fff"></div>
<div class="t" style="left:360px;top:532px;font-size:16px;color:#333">20210309185347e5.jpg</div>
<div class="t" style="left:556px;width:300px;text-align:center;top:532px;font-size:16px;color:#222">Admin</div>
<div class="t" style="left:654px;width:300px;text-align:center;top:532px;font-size:16px;color:#222">私密</div>
<div class="t" style="left:820px;width:300px;text-align:center;top:532px;font-size:16px;color:#333">2021-03-09 20:37:21</div>
<div class="t" style="left:1008px;width:300px;text-align:center;top:532px;font-size:16px;color:#667">1</div>
<div class="t" style="left:1146px;width:300px;text-align:center;top:532px;font-size:16px;color:#333">0</div>
<div style="left:1389px;top:536px;width:14px;height:3px;background:#222"></div>
<div style="left:1407px;top:536px;width:14px;height:3px;background:#222"></div>
<div style="left:313px;top:572px;width:14px;height:14px;border:1.5px solid #888;border-radius:3px;background:#fff"></div>
<div class="t" style="left:360px;top:571px;font-size:16px;color:#333">20210309185347e5.jpg</div>
<div class="t" style="left:556px;width:300px;text-align:center;top:571px;font-size:16px;color:#222">Admin</div>
<div class="t" style="left:654px;width:300px;text-align:center;top:571px;font-size:16px;color:#222">私密</div>
<div class="t" style="left:820px;width:300px;text-align:center;top:571px;font-size:16px;color:#333">2021-03-09 20:36:31</div>
<div class="t" style="left:1008px;width:300px;text-align:center;top:571px;font-size:16px;color:#4a78b8">1</div>
<div class="t" style="left:1146px;width:300px;text-align:center;top:571px;font-size:16px;color:#333">0</div>
<div style="left:1389px;top:575px;width:14px;height:3px;background:#222"></div>
<div style="left:1407px;top:575px;width:14px;height:3px;background:#222"></div>
<div style="left:313px;top:612px;width:14px;height:14px;border:1.5px solid #888;border-radius:3px;background:#fff"></div>
<div class="t" style="left:360px;top:611px;font-size:16px;color:#333">20210309185347e5.jpg</div>
<div class="t" style="left:556px;width:300px;text-align:center;top:611px;font-size:16px;color:#222">Admin</div>
<div class="t" style="left:654px;width:300px;text-align:center;top:611px;font-size:16px;color:#4da3ff">公开</div>
<div class="t" style="left:820px;width:300px;text-align:center;top:611px;font-size:16px;color:#333">2021-03-09 20:35:54</div>
<div class="t" style="left:1008px;width:300px;text-align:center;top:611px;font-size:16px;color:#007bff">2</div>
<div class="t" style="left:1146px;width:300px;text-align:center;top:611px;font-size:16px;color:#333">0</div>
<div style="left:1389px;top:615px;width:14px;height:3px;background:#222"></div>
<div style="left:1407px;top:615px;width:14px;height:3px;background:#222"></div>
<div style="left:313px;top:652px;width:14px;height:14px;border:1.5px solid #888;border-radius:3px;background:#fff"></div>
<div class="t" style="left:360px;top:651px;font-size:16px;color:#333">20210309185347e5.jpg</div>
<div class="t" style="left:556px;width:300px;text-align:center;top:651px;font-size:16px;color:#222">Admin</div>
<div class="t" style="left:654px;width:300px;text-align:center;top:651px;font-size:16px;color:#007bff">私密</div>
<div class="t" style="left:820px;width:300px;text-align:center;top:651px;font-size:16px;color:#333">2021-03-09 20:35:47</div>
<div class="t" style="left:1008px;width:300px;text-align:center;top:651px;font-size:16px;color:#007bff">2</div>
<div class="t" style="left:1146px;width:300px;text-align:center;top:651px;font-size:16px;color:#333">0</div>
<div style="left:1389px;top:655px;width:14px;height:3px;background:#222"></div>
<div style="left:1407px;top:655px;width:14px;height:3px;background:#222"></div>
</div>
</div></div>
</body>
</html>
